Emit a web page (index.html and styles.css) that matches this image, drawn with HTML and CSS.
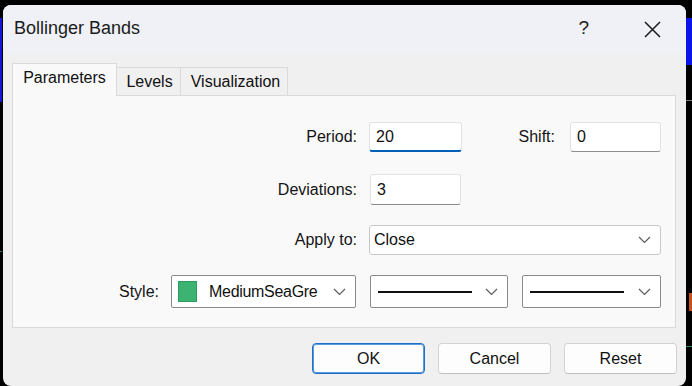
FILE: index.html
```html
<!DOCTYPE html>
<html>
<head>
<meta charset="utf-8">
<link rel="stylesheet" href="styles.css">
</head>
<body>
<div class="chart">
  <span class="mark blue-left"></span>
  <span class="mark blue-right"></span>
  <span class="mark grey-right"></span>
  <span class="mark orange-right"></span>
  <span class="mark green-right"></span>
  <span class="mark green-left"></span>
</div>
<div class="dialog">
  <div class="titlebar">
    <span class="title">Bollinger Bands</span>
    <span class="help">?</span>
    <svg class="close" width="17" height="17" viewBox="0 0 17 17"><path d="M1 1 L16 16 M16 1 L1 16" stroke="#1a1a1a" stroke-width="1.5" fill="none"/></svg>
  </div>
  <div class="body">
    <div class="tabs">
      <div class="tab active t1">Parameters</div>
      <div class="tab t2">Levels</div>
      <div class="tab t3">Visualization</div>
    </div>
    <div class="panel">
      <div class="row r1">
        <span class="lbl">Period:</span>
        <div class="edit focus w93">20</div>
        <span class="lbl2">Shift:</span>
        <div class="edit w91">0</div>
      </div>
      <div class="row r2">
        <span class="lbl">Deviations:</span>
        <div class="edit w92">3</div>
      </div>
      <div class="row r3">
        <span class="lbl">Apply to:</span>
        <div class="combo light w292"><span class="ctext">Close</span>
          <svg class="chev" width="13" height="8" viewBox="0 0 13 8"><path d="M1 1 L6.5 6.5 L12 1" stroke="#5c5c5c" stroke-width="1.2" fill="none"/></svg>
        </div>
      </div>
      <div class="row r4">
        <span class="lbl lstyle">Style:</span>
        <div class="combo dark w185"><span class="swatch"></span><span class="ctext clip">MediumSeaGre</span>
          <svg class="chev" width="13" height="8" viewBox="0 0 13 8"><path d="M1 1 L6.5 6.5 L12 1" stroke="#5c5c5c" stroke-width="1.2" fill="none"/></svg>
        </div>
        <div class="combo dark w138"><span class="line"></span>
          <svg class="chev" width="13" height="8" viewBox="0 0 13 8"><path d="M1 1 L6.5 6.5 L12 1" stroke="#5c5c5c" stroke-width="1.2" fill="none"/></svg>
        </div>
        <div class="combo dark w139"><span class="line"></span>
          <svg class="chev" width="13" height="8" viewBox="0 0 13 8"><path d="M1 1 L6.5 6.5 L12 1" stroke="#5c5c5c" stroke-width="1.2" fill="none"/></svg>
        </div>
      </div>
    </div>
    <div class="buttons">
      <div class="btn default">OK</div>
      <div class="btn">Cancel</div>
      <div class="btn">Reset</div>
    </div>
  </div>
</div>
</body>
</html>
```
FILE: styles.css
```css
html, body {
  margin: 0;
  padding: 0;
}
body {
  width: 692px;
  height: 386px;
  overflow: hidden;
  background: #000;
  font-family: "Liberation Sans", Arial, sans-serif;
  color: #111;
  position: relative;
  padding: 5px 0 0 3px;
  box-sizing: border-box;
}
.chart {
  position: absolute;
  inset: 0;
}
.mark {
  position: absolute;
  display: block;
}
.blue-left { left: 0; top: 18px; width: 2px; height: 84px; background: #1515d8; }
.blue-right { right: 0; top: 18px; width: 6px; height: 47px; background: #0a14e8; }
.grey-right { right: 0; top: 100px; width: 6px; height: 1px; background: #777; }
.orange-right { right: 0; top: 293px; width: 3px; height: 18px; background: #c8501a; }
.green-right { right: 0; top: 346px; width: 6px; height: 1px; background: #2e8b57; }
.green-left { left: 0; top: 251px; width: 2px; height: 1px; background: #2e8b57; }

.dialog {
  position: relative;
  width: 683px;
  height: 381px;
  background: #f0f0f0;
  border-radius: 8px;
  overflow: hidden;
}
.titlebar {
  height: 47px;
  background: #eff1f7;
  display: flex;
  align-items: center;
  padding-left: 11px;
}
.title {
  font-size: 18px;
  color: #1a1a1a;
  padding-bottom: 1px;
}
.help {
  margin-left: auto;
  font-size: 19px;
  color: #1a1a1a;
  padding-bottom: 1px;
}
.close {
  margin-left: 55px;
  margin-right: 25px;
  margin-top: 1px;
}
.body {
  padding: 11px 0 0 9px;
}
.tabs {
  display: flex;
  align-items: flex-end;
  height: 32px;
}
.tab {
  box-sizing: border-box;
  height: 28px;
  border: 1px solid #dadada;
  border-bottom: none;
  border-left: none;
  background: #f0f0f0;
  font-size: 16px;
  display: flex;
  align-items: center;
  justify-content: center;
  color: #111;
}
.tab.active {
  height: 33px;
  margin-bottom: -1px;
  border-left: 1px solid #dadada;
  background: #f9f9f9;
  position: relative;
  z-index: 1;
  padding-bottom: 4px;
}
.t1 { width: 105px; }
.t2 { width: 64px; padding-left: 2px; }
.t3 { width: 107px; padding-left: 3px; }

.panel {
  box-sizing: border-box;
  width: 664px;
  height: 233px;
  border: 1px solid #dadada;
  background: #f9f9f9;
  padding-top: 26px;
}
.row {
  display: flex;
  align-items: center;
  font-size: 16px;
}
.r1 { height: 30px; }
.r2 { height: 31px; margin-top: 22px; }
.r3 { height: 30px; margin-top: 20px; }
.r4 { height: 33px; margin-top: 20px; }
.lbl {
  width: 344px;
  text-align: right;
  margin-right: 12px;
  color: #141414;
}
.lbl.lstyle {
  width: 146px;
}
.lbl2 {
  width: 93px;
  text-align: right;
  margin-right: 15px;
  color: #141414;
}
.edit {
  box-sizing: border-box;
  height: 30px;
  background: #fff;
  border: 1px solid #e3e3e3;
  border-bottom: 1px solid #8c8c8c;
  border-radius: 3px;
  padding-left: 6px;
  display: flex;
  align-items: center;
  font-size: 16px;
  color: #111;
}
.r2 .edit { height: 31px; margin-left: 1px; }
.edit.focus {
  border-bottom: 2px solid #005fb8;
  padding-top: 1px;
}
.w93 { width: 93px; }
.w92 { width: 91px; }
.w91 { width: 91px; }

.combo {
  box-sizing: border-box;
  height: 100%;
  background: #fff;
  border: 1px solid #c8c8c8;
  border-radius: 3px;
  display: flex;
  align-items: center;
  padding-left: 4px;
  padding-right: 9px;
  font-size: 16px;
  color: #111;
}
.combo.dark {
  border: 1px solid #8a8a8a;
  border-radius: 2px;
}
.w292 { width: 292px; }
.w185 { width: 185px; margin-right: 14px; padding-left: 6px; }
.w138 { width: 138px; margin-right: 14px; padding-left: 7px; }
.w139 { width: 139px; padding-left: 7px; }
.ctext {
  flex: 1;
  white-space: nowrap;
  overflow: hidden;
}
.ctext.clip {
  margin-left: 12px;
  letter-spacing: -0.3px;
}
.chev {
  flex: none;
}
.swatch {
  width: 17px;
  height: 19px;
  background: #3cb371;
  border: 1px solid #2f9a5e;
  flex: none;
}
.line {
  width: 94px;
  height: 2px;
  background: #111;
  margin-right: auto;
}
.buttons {
  display: flex;
  justify-content: flex-end;
  gap: 13px;
  padding-right: 9px;
  margin-top: 15px;
}
.btn {
  box-sizing: border-box;
  width: 113px;
  height: 31px;
  background: #fdfdfd;
  border: 1px solid #d3d3d3;
  border-bottom-color: #c0c0c0;
  border-radius: 4px;
  display: flex;
  align-items: center;
  justify-content: center;
  font-size: 16px;
  color: #111;
}
.btn.default {
  border: 1px solid #1f6fc4;
  box-shadow: inset 0 0 0 1px #5a9be0;
}
```
